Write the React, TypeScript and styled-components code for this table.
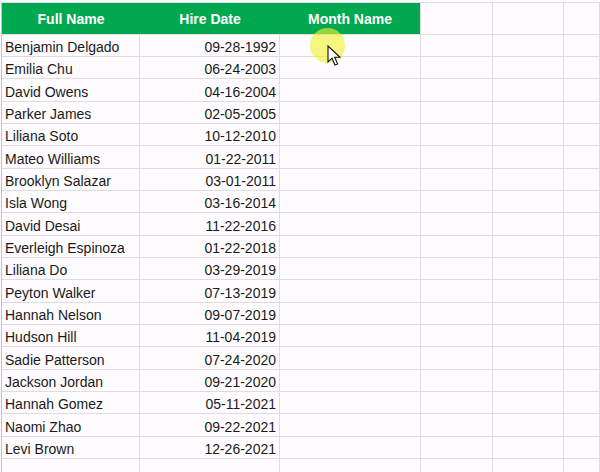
import React from "react";
import styled, { createGlobalStyle } from "styled-components";

const Global = createGlobalStyle`
  html, body { margin: 0; padding: 0; background: #fefcfe; }
  body { font-family: "Liberation Sans", Arial, sans-serif; overflow: hidden; }
`;

const COLS = "138px 140px 141px 72px 71px 1fr";
const GRID = "#dedcde";

const Sheet = styled.div`
  position: relative;
  width: 600px;
  height: 472px;
  overflow: hidden;
  box-sizing: border-box;
  padding: 2px 0 0 1px;
`;

const Table = styled.div`
  border-top: 1px solid ${GRID};
  border-left: 1px solid #c4c2c4;
`;

const HeaderRow = styled.div`
  display: grid;
  grid-template-columns: 419px 1fr;
  height: 32px;
  box-sizing: border-box;
  border-bottom: 1px solid ${GRID};
`;

const GreenBand = styled.div`
  display: grid;
  grid-template-columns: 138px 140px 140px;
  background: #00a94f;
  border-right: 1px solid ${GRID};
`;

const HeadCell = styled.div`
  display: flex;
  align-items: center;
  justify-content: center;
  color: #ffffff;
  font-weight: bold;
  font-size: 14px;
  padding-top: 1px;
`;

const BlankHead = styled.div`
  display: grid;
  grid-template-columns: 72px 71px 1fr;
`;

const Row = styled.div<{ $h: number }>`
  display: grid;
  grid-template-columns: ${COLS};
  height: ${(p) => p.$h}px;
  box-sizing: border-box;
  border-bottom: 1px solid ${GRID};
`;

const Cell = styled.div<{ $align?: "left" | "right" }>`
  display: flex;
  align-items: flex-end;
  justify-content: ${(p) => (p.$align === "right" ? "flex-end" : "flex-start")};
  padding: 0 3px 1px 3px;
  border-right: 1px solid ${GRID};
  font-size: 14px;
  line-height: 16px;
  color: #1a1a1a;
  white-space: nowrap;
  overflow: hidden;
`;

const Highlight = styled.div`
  position: absolute;
  left: 310px;
  top: 28px;
  width: 35px;
  height: 35px;
  border-radius: 50%;
  background: rgba(240, 240, 50, 0.62);
  pointer-events: none;
`;

const Pointer = styled.svg`
  position: absolute;
  left: 327px;
  top: 45px;
  width: 15px;
  height: 22px;
  pointer-events: none;
`;

const data: [string, string][] = [
  ["Benjamin Delgado", "09-28-1992"],
  ["Emilia Chu", "06-24-2003"],
  ["David Owens", "04-16-2004"],
  ["Parker James", "02-05-2005"],
  ["Liliana Soto", "10-12-2010"],
  ["Mateo Williams", "01-22-2011"],
  ["Brooklyn Salazar", "03-01-2011"],
  ["Isla Wong", "03-16-2014"],
  ["David Desai", "11-22-2016"],
  ["Everleigh Espinoza", "01-22-2018"],
  ["Liliana Do", "03-29-2019"],
  ["Peyton Walker", "07-13-2019"],
  ["Hannah Nelson", "09-07-2019"],
  ["Hudson Hill", "11-04-2019"],
  ["Sadie Patterson", "07-24-2020"],
  ["Jackson Jordan", "09-21-2020"],
  ["Hannah Gomez", "05-11-2021"],
  ["Naomi Zhao", "09-22-2021"],
  ["Levi Brown", "12-26-2021"],
  ["", ""],
];

const lineY = (k: number) => 56 + Math.round(22.33 * k);

export default function App() {
  return (
    <>
      <Global />
      <Sheet>
        <Table>
          <HeaderRow>
            <GreenBand>
              <HeadCell>Full Name</HeadCell>
              <HeadCell>Hire Date</HeadCell>
              <HeadCell>Month Name</HeadCell>
            </GreenBand>
            <BlankHead>
              <Cell />
              <Cell />
              <Cell />
            </BlankHead>
          </HeaderRow>
          {data.map(([name, date], i) => (
            <Row key={i} $h={i === 0 ? 22 : lineY(i) - lineY(i - 1)}>
              <Cell>{name}</Cell>
              <Cell $align="right">{date}</Cell>
              <Cell />
              <Cell />
              <Cell />
              <Cell />
            </Row>
          ))}
        </Table>
        <Highlight />
        <Pointer viewBox="0 0 15 22">
          <path
            d="M1 1 L1 17 L5 13.2 L8 20 L10.6 18.9 L7.7 12.3 L13 12.3 Z"
            fill="#ffffff"
            stroke="#111111"
            strokeWidth="1.1"
            strokeLinejoin="miter"
          />
        </Pointer>
      </Sheet>
    </>
  );
}
